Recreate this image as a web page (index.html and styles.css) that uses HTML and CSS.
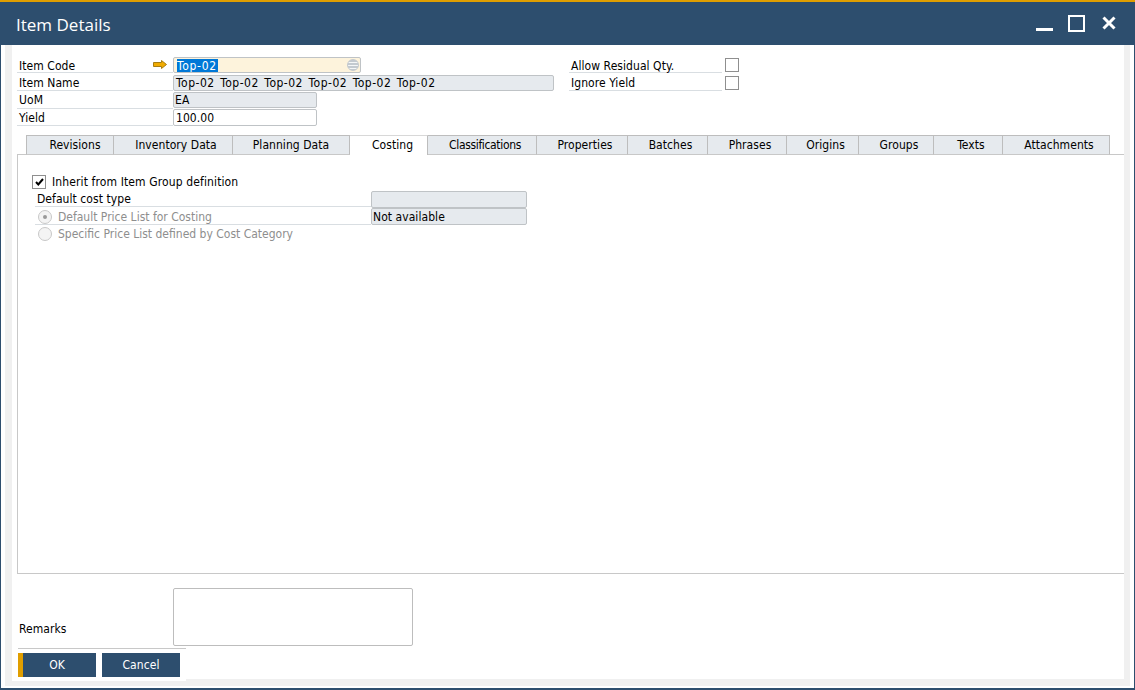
FILE: index.html
```html
<!DOCTYPE html>
<html lang="en">
<head>
    <meta charset="UTF-8">
    <meta name="viewport" content="width=device-width, initial-scale=1.0">
    <title>Item Details</title>
    <link rel="stylesheet" href="styles.css">
</head>
<body>
    <div class="window">
        <header class="titlebar">
            <span class="title">Item Details</span>
            <div class="win-controls">
                <svg width="17" height="17" viewBox="0 0 17 17"><rect x="0" y="13" width="17" height="3" fill="#fff"/></svg>
                <svg width="17" height="17" viewBox="0 0 17 17"><rect x="1" y="1" width="15" height="15" fill="none" stroke="#fff" stroke-width="2"/></svg>
                <svg class="win-close" width="14" height="14" viewBox="0 0 14 14"><path d="M1.5 1.5 L12.5 12.5 M12.5 1.5 L1.5 12.5" stroke="#fff" stroke-width="3" fill="none"/></svg>
            </div>
        </header>

        <div class="frame">
            <div class="content">
                <section class="head-form">
                    <div class="head-left">
                        <div class="row row-code">
                            <label class="lbl">Item Code <svg class="link-arrow" width="14" height="9" viewBox="0 0 14 9"><path d="M0.5 2.5 H8.5 V0.5 L13.5 4.5 L8.5 8.5 V6.5 H0.5 Z" fill="#f0ab00" stroke="#a67c12" stroke-width="1"/></svg></label>
                            <div class="field code-field"><span class="selected">Top-02</span><span class="lookup"></span></div>
                        </div>
                        <div class="row row-name">
                            <label class="lbl">Item Name</label>
                            <div class="field readonly name-field">Top-02 Top-02 Top-02 Top-02 Top-02 Top-02</div>
                        </div>
                        <div class="row row-uom">
                            <label class="lbl">UoM</label>
                            <div class="field readonly short-field">EA</div>
                        </div>
                        <div class="row row-yield">
                            <label class="lbl">Yield</label>
                            <div class="field short-field">100.00</div>
                        </div>
                    </div>
                    <div class="head-right">
                        <div class="check-row row-code"><label class="lbl">Allow Residual Qty.</label><span class="checkbox"></span></div>
                        <div class="check-row row-name"><label class="lbl">Ignore Yield</label><span class="checkbox"></span></div>
                    </div>
                </section>

                <nav class="tabs">
                    <div class="tab w-revisions">Revisions</div>
                    <div class="tab w-inventory">Inventory Data</div>
                    <div class="tab w-planning">Planning Data</div>
                    <div class="tab active w-costing">Costing</div>
                    <div class="tab w-class">Classifications</div>
                    <div class="tab w-props">Properties</div>
                    <div class="tab w-batches">Batches</div>
                    <div class="tab w-phrases">Phrases</div>
                    <div class="tab w-origins">Origins</div>
                    <div class="tab w-groups">Groups</div>
                    <div class="tab w-texts">Texts</div>
                    <div class="tab w-attach">Attachments</div>
                </nav>

                <div class="panel-wrap">
                    <section class="tab-panel">
                        <div class="inherit-row">
                            <span class="checkbox checked">
                                <svg width="9" height="8" viewBox="0 0 9 8"><path d="M1 4 L3.3 6.4 L8 1" fill="none" stroke="#000" stroke-width="2"/></svg>
                            </span>
                            <span>Inherit from Item Group definition</span>
                        </div>
                        <div class="cost-row">
                            <span class="cost-label plain">Default cost type</span>
                            <div class="field readonly cost-field"></div>
                        </div>
                        <div class="cost-row">
                            <span class="cost-label radio-label"><span class="radio on"></span>Default Price List for Costing</span>
                            <div class="field readonly cost-field">Not available</div>
                        </div>
                        <div class="cost-row">
                            <span class="cost-label radio-label no-line"><span class="radio"></span>Specific Price List defined by Cost Category</span>
                        </div>
                    </section>
                </div>

                <section class="remarks">
                    <label class="remarks-lbl">Remarks</label>
                    <div class="remarks-box"></div>
                </section>

                <div class="bottom">
                    <footer class="actions">
                        <div class="btn-row">
                            <button class="btn primary">OK</button>
                            <button class="btn">Cancel</button>
                        </div>
                    </footer>
                </div>
            </div>
        </div>
    </div>
</body>
</html>
```

FILE: styles.css
```css
* {
    box-sizing: border-box;
}

html, body {
    margin: 0;
    height: 100%;
    overflow: hidden;
}

body {
    font-family: "DejaVu Sans Condensed", "DejaVu Sans", sans-serif;
    font-size: 12px;
    letter-spacing: 0.06px;
    color: #000;
    background: #fff;
}

.window {
    width: 1135px;
    height: 690px;
    display: flex;
    flex-direction: column;
    border: 1px solid #2d4e6e;
    border-top: 0;
    border-bottom-width: 2px;
}

.titlebar {
    height: 45px;
    margin: 0 -1px;
    background: #2d4e6e;
    border-top: 2px solid #e09e00;
    display: flex;
    align-items: center;
    justify-content: space-between;
    padding: 0 19px 0 16px;
    flex: none;
}

.title {
    color: #fff;
    font-family: "Open Sans", sans-serif;
    font-size: 17px;
    letter-spacing: 0;
    padding-top: 2px;
}

.win-controls {
    display: flex;
    align-items: center;
    gap: 15px;
}

.win-close {
    margin: 0 0 1px 2px;
}

.frame {
    flex: 1;
    display: flex;
    padding: 0 4px 2px 4px;
    min-height: 0;
}

.content {
    flex: 1;
    min-width: 0;
    background: #f0f0f0;
    padding: 0 6px 7px 7px;
    display: flex;
    flex-direction: column;
}

/* header fields */
.head-form {
    background: #fff;
    display: flex;
    padding: 12px 0 0 5px;
    height: 90px;
    flex: none;
}

.head-left {
    width: 552px;
}

.row {
    display: flex;
    height: 17px;
}

.row-code {
    height: 18px;
}

.lbl {
    display: block;
    height: 16px;
    line-height: 16px;
    padding-left: 2px;
    border-bottom: 1px solid #d9dee2;
    white-space: nowrap;
}

.row-code .lbl,
.row-yield .lbl {
    line-height: 18px;
}

.row-uom .lbl,
.row-yield .lbl {
    height: 17px;
}

.row .lbl {
    width: 156px;
    position: relative;
}

.link-arrow {
    position: absolute;
    right: 6px;
    top: 3px;
}

.field {
    height: 16px;
    line-height: 15px;
    border: 1px solid #bfc3c6;
    border-radius: 2px;
    background: #fff;
    padding: 0 1px;
    white-space: nowrap;
    overflow: hidden;
}

.row-yield .field {
    height: 17px;
    line-height: 16px;
    padding-left: 2px;
}

.readonly {
    background: #e6eaee;
}

.code-field {
    width: 188px;
    background: #fdf3dc;
    display: flex;
    align-items: center;
    justify-content: space-between;
    padding: 1px 1px 0 3px;
    letter-spacing: 0.7px;
}

.selected {
    background: #0078d7;
    color: #fff;
    line-height: 14px;
    padding-right: 1px;
}

.lookup {
    width: 12px;
    height: 12px;
    margin-top: -1px;
    border-radius: 50%;
    background: repeating-linear-gradient(#c3cad0 0 2px, #f4f6f7 2px 3px);
    border: 1px solid #c3c9ce;
}

.name-field {
    width: 381px;
    padding-left: 2px;
    letter-spacing: 0.5px;
    word-spacing: 1.6px;
}

.short-field {
    width: 144px;
}

.check-row {
    display: flex;
    align-items: flex-start;
}

.check-row .lbl {
    width: 153px;
}

.check-row.row-code {
    height: 18px;
}

.check-row.row-name {
    height: 17px;
}

.checkbox {
    display: flex;
    align-items: center;
    justify-content: center;
    width: 14px;
    height: 14px;
    border: 1px solid #8f8f8f;
    background: #fff;
    flex: none;
    margin: 1px 0 0 3px;
}

/* tabs */
.tabs {
    display: flex;
    background: #fff;
    padding-left: 5px;
    flex: none;
    height: 20px;
}

.tabs::before {
    content: "";
    width: 9px;
    border-bottom: 1px solid #c8c8c8;
}

.tabs::after {
    content: "";
    flex: 1;
    border-bottom: 1px solid #c8c8c8;
}

.tab {
    height: 20px;
    line-height: 19px;
    padding-left: 6px;
    text-align: center;
    background: #e6eaee;
    border-top: 1px solid #bdbdbd;
    border-right: 1px solid #bdbdbd;
    border-bottom: 1px solid #c8c8c8;
}

.tab.w-revisions {
    border-left: 1px solid #bdbdbd;
    padding-left: 10px;
}

.tab.active {
    background: #fff;
    border-top-color: #d8d8d8;
    border-bottom: 0;
    padding-left: 8px;
}

.w-revisions { width: 88px; }
.w-inventory { width: 119px; }
.tab.w-planning { width: 117px; padding-left: 0; }
.w-costing { width: 78px; }
.w-class { width: 109px; letter-spacing: -0.35px; }
.w-props { width: 91px; }
.w-batches { width: 80px; }
.w-phrases { width: 79px; }
.w-origins { width: 72px; }
.w-groups { width: 75px; }
.w-texts { width: 69px; }
.w-attach { width: 107px; }

.panel-wrap {
    flex: 1;
    display: flex;
    min-height: 0;
    background: #fff;
    padding-left: 5px;
}

.tab-panel {
    flex: 1;
    border-left: 1px solid #c8c8c8;
    border-bottom: 1px solid #c8c8c8;
    padding: 19px 0 0 14px;
}

.inherit-row {
    display: flex;
    align-items: center;
    gap: 6px;
    height: 16px;
    margin-bottom: 1px;
    letter-spacing: 0.12px;
}

.inherit-row .checkbox {
    margin: 0;
}

.cost-row {
    display: flex;
    height: 17px;
    padding-left: 3px;
}

.cost-label {
    width: 336px;
    height: 16px;
    line-height: 16px;
    padding-left: 2px;
    color: #8e8e8e;
    border-bottom: 1px solid #d9dee2;
    display: flex;
    align-items: center;
}

.cost-label.plain {
    color: #000;
}

.radio-label {
    height: 17px;
    padding-top: 1px;
    letter-spacing: 0;
}

.cost-label.no-line {
    border-bottom: 0;
}

.cost-field {
    width: 156px;
    height: 17px;
    line-height: 16px;
}

.radio {
    width: 14px;
    height: 14px;
    border-radius: 50%;
    border: 1px solid #c8c8c8;
    background: #f4f4f4;
    margin: 0 6px 0 1px;
    flex: none;
    display: flex;
    align-items: center;
    justify-content: center;
}

.radio.on::after {
    content: "";
    width: 4px;
    height: 4px;
    border-radius: 50%;
    background: #9a9a9a;
}

/* bottom */
.remarks {
    background: #fff;
    height: 74px;
    flex: none;
    display: flex;
    align-items: flex-end;
    padding: 14px 0 2px 7px;
}

.remarks-lbl {
    width: 154px;
    line-height: 16px;
    padding-bottom: 9px;
}

.remarks-box {
    width: 240px;
    height: 58px;
    border: 1px solid #bdbdbd;
    border-radius: 2px;
}

.bottom {
    background: #fff;
    height: 31px;
    flex: none;
}

.actions {
    width: 174px;
    height: 33px;
    background: #fff;
    padding-left: 6px;
}

.btn-row {
    display: flex;
    gap: 6px;
    border-top: 1px solid #c8c8c8;
    padding-top: 4px;
}

.btn {
    width: 78px;
    height: 24px;
    background: #2d4e6e;
    color: #fff;
    border: 0;
    font: inherit;
    letter-spacing: inherit;
    padding: 0;
}

.btn.primary {
    box-shadow: inset 5px 0 0 #e09e00;
}
```
